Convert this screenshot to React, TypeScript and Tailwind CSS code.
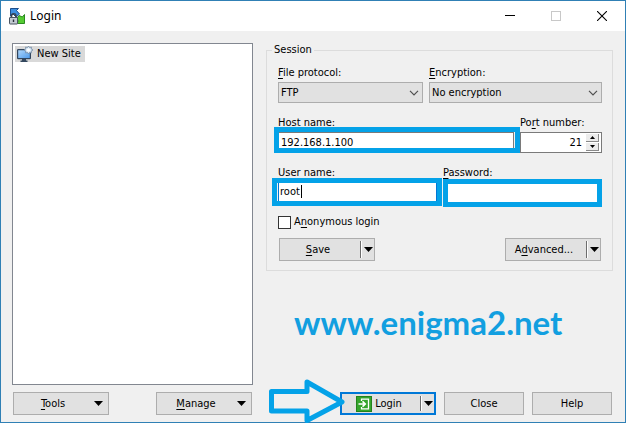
import React, { useState } from 'react';

interface SelectFieldProps {
  id: string;
  label: React.ReactNode;
  options: string[];
}

interface SplitButtonProps {
  children: React.ReactNode;
  menuLabel: string;
  primary?: boolean;
}

const U: React.FC<{ children: string }> = ({ children }) => (
  <span className="underline underline-offset-2">{children}</span>
);

const Triangle: React.FC = () => (
  <svg width="9" height="5" viewBox="0 0 9 5" aria-hidden="true">
    <path d="M0 0h9L4.5 5z" fill="#000" />
  </svg>
);

const AppIcon: React.FC = () => (
  <svg width="17" height="17" viewBox="0 0 17 17" aria-hidden="true">
    <path d="M1.5.5h8L7.500 2.500l3 3.500L7 9 4 6 1.500 8z" fill="#3d8fe0" stroke="#1d4f8c" />
    <path d="M15.500 6.500v9h-8l2-2.300-2-2.400 2.600-3.300 3.200 1.500z" fill="#55cb33" stroke="#2a8a20" />
    <path d="M2.500 10V8a2.200 2.200 0 0 1 4.400 0v2" fill="none" stroke="#3a424e" strokeWidth="1.600" />
    <rect x=".5" y="9.500" width="8" height="6.500" rx=".5" fill="#c3cad2" stroke="#4b5563" />
    <path d="M4.500 11.500v2.500" stroke="#272e38" strokeWidth="1.400" />
  </svg>
);

const SiteIcon: React.FC = () => (
  <svg width="16" height="16" viewBox="0 0 16 16" aria-hidden="true">
    <defs>
      <linearGradient id="screen" x1="0" y1="0" x2="1" y2="1">
        <stop offset="0" stopColor="#b4dafc" />
        <stop offset="1" stopColor="#4a98ea" />
      </linearGradient>
    </defs>
    <rect x=".6" y="3.600" width="12.800" height="9" rx=".6" fill="url(#screen)" stroke="#33475e" strokeWidth="1.200" />
    <path d="M5 13h4v1.500h1.500V16h-7v-1.500H5z" fill="#33475e" />
    <path d="M11.500 0l1 1.600 1.900-.6-.2 1.900 1.800 1.100-1.800 1 .2 2-1.900-.6-1 1.600-1-1.600-1.900.6.2-2L7 4l1.800-1.100L8.600 1l1.900.6z" fill="#dcebf8" stroke="#7189a3" strokeWidth=".8" />
    <circle cx="11.500" cy="4" r="1.600" fill="#fff" />
  </svg>
);

const LoginIcon: React.FC = () => (
  <svg width="16" height="16" viewBox="0 0 16 16" aria-hidden="true">
    <rect x=".5" y=".5" width="15" height="15" fill="#35a52c" stroke="#23821d" />
    <path d="M5.500 5V3.200h7v9.600h-7V11" fill="none" stroke="#fff" strokeWidth="1.300" />
    <path d="M2.500 8h6M6.500 5.300L9.300 8l-2.800 2.700" fill="none" stroke="#fff" strokeWidth="1.600" />
  </svg>
);

const SelectField: React.FC<SelectFieldProps> = ({ id, label, options }) => (
  <div className="flex flex-col gap-px">
    <label htmlFor={id} className="leading-4">{label}</label>
    <div className="relative">
      <select id={id} className="block h-[21px] w-full appearance-none border border-[#adadad] bg-[#e1e1e1] pl-[2px] pr-5 outline-none">
        {options.map((option) => (
          <option key={option}>{option}</option>
        ))}
      </select>
      <svg className="pointer-events-none absolute right-1 top-2" width="10" height="6" viewBox="0 0 10 6" aria-hidden="true">
        <path d="M1 .8l4 4 4-4" fill="none" stroke="#505050" strokeWidth="1.200" />
      </svg>
    </div>
  </div>
);

const SplitButton: React.FC<SplitButtonProps> = ({ children, menuLabel, primary }) => (
  <div className={`flex h-[23px] w-24 bg-[#e1e1e1] ${primary ? 'border-2 border-[#0078d7]' : 'border border-[#adadad]'}`}>
    <button type="button" className="flex flex-1 items-center justify-center gap-[3px] pr-1">
      {children}
    </button>
    <span className="my-[2px] w-[2px] border-l border-[#6d6d6d] bg-white" />
    <button type="button" aria-label={menuLabel} className="flex w-3 items-center justify-center">
      <Triangle />
    </button>
  </div>
);

const MenuButton: React.FC<{ children: React.ReactNode }> = ({ children }) => (
  <button type="button" className="flex h-[23px] w-24 items-center border border-[#adadad] bg-[#e1e1e1] pr-1">
    <span className="flex-1">{children}</span>
    <span className="flex w-3 justify-center">
      <Triangle />
    </span>
  </button>
);

const TitleBar: React.FC = () => (
  <header className="flex h-[30px] items-center bg-white pl-2">
    <AppIcon />
    <h1 className='flex-1 pl-1 font-["Noto_Sans",sans-serif] text-[12px] leading-4'>Login</h1>
    <button type="button" aria-label="Minimize" className="flex h-full w-[46px] items-center justify-center">
      <svg width="10" height="10" viewBox="0 0 10 10">
        <path d="M0 4.500h10" stroke="#000" />
      </svg>
    </button>
    <button type="button" aria-label="Maximize" disabled className="flex h-full w-[46px] items-center justify-center">
      <svg width="10" height="10" viewBox="0 0 10 10">
        <rect x=".5" y=".5" width="9" height="9" fill="none" stroke="#c8c8c8" />
      </svg>
    </button>
    <button type="button" aria-label="Close window" className="flex h-full w-[46px] items-center justify-center">
      <svg width="10" height="10" viewBox="0 0 10 10">
        <path d="M0 0l10 10M10 0L0 10" stroke="#000" strokeWidth="1.100" />
      </svg>
    </button>
  </header>
);

const SessionForm: React.FC = () => {
  const [host, setHost] = useState('192.168.1.100');
  const [port, setPort] = useState(21);
  const [user, setUser] = useState('root');
  const [password, setPassword] = useState('');

  return (
    <fieldset className="min-w-0 border border-[#dcdcdc] px-[5px] pb-[9px] pt-2">
      <legend className="px-[2px]">Session</legend>
      <div className="flex flex-col gap-3 pl-[6px] pr-[5px]">
        <div className="grid grid-cols-[145fr_173fr] gap-[6px]">
          <SelectField id="protocol" label={<><U>F</U>ile protocol:</>} options={['FTP', 'SFTP', 'SCP', 'WebDAV']} />
          <SelectField id="encryption" label={<><U>E</U>ncryption:</>} options={['No encryption', 'TLS/SSL Implicit encryption']} />
        </div>

        <div className="grid grid-cols-[236fr_82fr] gap-[6px]">
          <div className="flex flex-col gap-px">
            <label htmlFor="host" className="leading-4"><U>H</U>ost name:</label>
            <div className="relative">
              <input
                id="host"
                value={host}
                onChange={(e) => setHost(e.target.value)}
                className="block h-[21px] w-full border border-[#7a7a7a] bg-white pl-[2px] outline-none"
              />
              <span className="pointer-events-none absolute -left-1 -right-[6px] -top-[5px] bottom-0 border-[5px] border-[#04a2e8]" />
            </div>
          </div>
          <div className="flex flex-col gap-px">
            <label htmlFor="port" className="leading-4">Po<U>r</U>t number:</label>
            <div className="relative">
              <input
                id="port"
                value={port}
                onChange={(e) => setPort(Number(e.target.value) || 0)}
                className="block h-[21px] w-full border border-[#7a7a7a] bg-white pr-[19px] text-right outline-none"
              />
              <div className="absolute right-[3px] top-[2px] flex w-[13px] flex-col gap-px">
                <button type="button" aria-label="Increase port" onClick={() => setPort(port + 1)} className="flex h-2 items-center justify-center border-b border-r border-[#8a8a8a] bg-[#ececec]">
                  <svg width="5" height="3" viewBox="0 0 5 3"><path d="M0 3h5L2.500 0z" /></svg>
                </button>
                <button type="button" aria-label="Decrease port" onClick={() => setPort(port - 1)} className="flex h-2 items-center justify-center border-b border-r border-[#8a8a8a] bg-[#ececec]">
                  <svg width="5" height="3" viewBox="0 0 5 3"><path d="M0 0h5L2.500 3z" /></svg>
                </button>
              </div>
            </div>
          </div>
        </div>

        <div className="grid grid-cols-2 gap-[6px]">
          <div className="flex flex-col gap-px">
            <label htmlFor="user" className="leading-4"><U>U</U>ser name:</label>
            <div className="relative">
              <input
                id="user"
                value={user}
                onChange={(e) => setUser(e.target.value)}
                className="block h-[21px] w-full border border-[#0078d7] bg-white pb-[2px] pl-px outline-none"
              />
              <span className="absolute left-[23px] top-[3px] h-[13px] w-px bg-black" />
              <span className="pointer-events-none absolute -bottom-[3px] -left-[6px] -right-[5px] -top-1 border-[5px] border-[#04a2e8]" />
            </div>
          </div>
          <div className="flex flex-col gap-px">
            <label htmlFor="password" className="leading-4"><U>P</U>assword:</label>
            <div className="relative">
              <input
                id="password"
                type="password"
                value={password}
                onChange={(e) => setPassword(e.target.value)}
                className="block h-[21px] w-full bg-white pl-[6px] outline-none"
              />
              <span className="pointer-events-none absolute -bottom-1 left-0 right-0 -top-[3px] border-[5px] border-[#04a2e8]" />
            </div>
          </div>
        </div>

        <label className="flex items-center gap-[3px]">
          <input type="checkbox" className="h-[13px] w-[13px] appearance-none border border-[#333] bg-white checked:bg-[#0078d7]" />
          <span>A<U>n</U>onymous login</span>
        </label>
      </div>

      <div className="mt-[9px] flex justify-between pl-[7px] pr-[6px]">
        <SplitButton menuLabel="Save options"><span><U>S</U>ave</span></SplitButton>
        <SplitButton menuLabel="Advanced options"><span>A<U>d</U>vanced...</span></SplitButton>
      </div>
    </fieldset>
  );
};

const App: React.FC = () => {
  return (
    <div className='flex min-h-screen flex-col border border-[#3080b5] bg-[#f0f0f0] font-["DejaVu_Sans_Condensed","DejaVu_Sans",sans-serif] text-[11px] leading-[14px] text-black'>
      <TitleBar />
      <main className="flex flex-1 gap-[13px] pb-[7px] pl-[11px] pr-3 pt-3">
        <section className="flex w-[241px] flex-col gap-[7px]">
          <ul className="flex-1 border border-[#828790] bg-white p-[2px]">
            <li className="flex">
              <button type="button" className="flex items-center gap-1 bg-[#d9d9d9] pl-[2px] pr-1">
                <SiteIcon />
                New Site
              </button>
            </li>
          </ul>
          <div className="flex justify-between px-px">
            <MenuButton><U>T</U>ools</MenuButton>
            <MenuButton><U>M</U>anage</MenuButton>
          </div>
        </section>

        <section className="flex min-w-0 flex-1 flex-col">
          <SessionForm />
          <div className="flex flex-1 items-center pl-7">
            <a href="#" className='pb-5 font-["Lato",sans-serif] text-[33px] font-bold leading-10 text-[#129fe0]'>www.enigma2.net</a>
          </div>
          <div className="flex justify-end gap-2 pr-px">
            <div className="relative">
              <SplitButton menuLabel="Login options" primary>
                <LoginIcon />
                <span>Login</span>
              </SplitButton>
              <svg className="pointer-events-none absolute -left-[71px] -top-[13px]" width="77" height="44" viewBox="0 0 77 44" aria-hidden="true">
                <path d="M2.500 12.500H38V3L73 23 38 41.500v-9.500H2.500z" fill="none" stroke="#04a2e8" strokeWidth="5" strokeLinejoin="round" />
              </svg>
            </div>
            <button type="button" className="h-[23px] w-20 border border-[#adadad] bg-[#e1e1e1]">Close</button>
            <button type="button" className="h-[23px] w-20 border border-[#adadad] bg-[#e1e1e1]">Help</button>
          </div>
        </section>
      </main>
    </div>
  );
};

export default App;
